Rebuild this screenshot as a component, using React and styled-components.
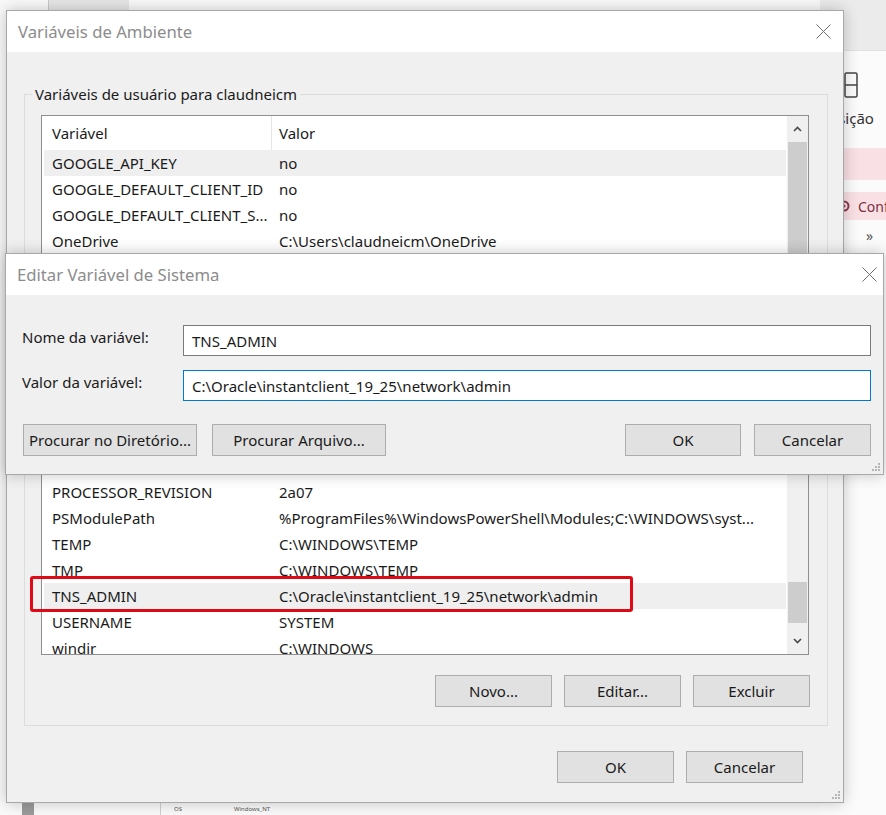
import React from 'react';
import styled, { createGlobalStyle } from 'styled-components';

const GlobalStyle = createGlobalStyle`
  html, body {
    margin: 0;
    padding: 0;
  }
  body {
    font-family: "Noto Sans", "Open Sans", sans-serif;
    background: #f9f9f9;
  }
`;

const Desktop = styled.div`
  position: relative;
  width: 886px;
  height: 815px;
  overflow: hidden;
  background: #f9f9f9;
  color: #1a1a1a;
`;

/* ---------- background app behind the dialogs ---------- */

const TopTab = styled.div`
  position: absolute;
  left: 48px;
  top: -6px;
  width: 80px;
  height: 16px;
  background: #e6e6e6;
  border-left: 1px solid #c8c8c8;
`;

const SidePane = styled.div`
  position: absolute;
  left: 820px;
  top: 0;
  width: 66px;
  height: 815px;
  background: #fbfbfb;
  display: flex;
  flex-direction: column;
  overflow: hidden;
`;

const SideTop = styled.div`
  height: 50px;
  flex-shrink: 0;
  background: #ebebeb;
  border-bottom: 1px solid #e0e0e0;
`;

const SideIcon = styled.div`
  height: 31px;
  padding-top: 21px;
  padding-left: 24px;
`;

const SideLabel = styled.div`
  font-size: 15px;
  text-align: right;
  padding-right: 13px;
  height: 30px;
  line-height: 30px;
  color: #333;
`;

const PinkBand = styled.div`
  height: ${(p) => p.$h}px;
  margin-top: ${(p) => p.$mt}px;
  flex-shrink: 0;
  background: #f9e0e5;
  display: flex;
  align-items: center;
  padding-left: 18px;
  gap: 8px;
  font-size: 14px;
  color: #7a3040;
  white-space: nowrap;
  & > svg {
    flex-shrink: 0;
  }
`;

const Chevrons = styled.div`
  margin-top: 6px;
  padding-left: 46px;
  font-size: 14px;
  color: #555;
`;

const BottomStrip = styled.div`
  position: absolute;
  left: 0;
  top: 803px;
  width: 886px;
  height: 12px;
  display: flex;
  align-items: center;
  font-size: 6px;
  color: #555;
`;

const StripBar = styled.div`
  width: ${(p) => p.$w}px;
  height: 12px;
  margin-left: ${(p) => p.$ml}px;
  background: ${(p) => p.$bg};
`;

const StripText = styled.span`
  margin-left: ${(p) => p.$ml}px;
`;

/* ---------- window chrome ---------- */

const Window = styled.div`
  position: absolute;
  left: ${(p) => p.$x}px;
  top: ${(p) => p.$y}px;
  width: ${(p) => p.$w}px;
  height: ${(p) => p.$h}px;
  box-sizing: border-box;
  display: flex;
  flex-direction: column;
  background: #f0f0f0;
  border: 1px solid #a8a8a8;
  box-shadow: 0 0 14px rgba(0, 0, 0, 0.22);
`;

const TitleBar = styled.div`
  height: 41px;
  flex-shrink: 0;
  background: #fff;
  display: flex;
  align-items: center;
  justify-content: space-between;
  padding: 0 ${(p) => p.$pr}px 0 11px;
  font-size: 16.7px;
  color: #8c8c8c;
`;

const Grip = styled.svg`
  position: absolute;
  right: 2px;
  bottom: 2px;
`;

const CloseIcon = () => (
  <svg width="15" height="15" viewBox="0 0 15 15">
    <path d="M0.5 0.5 L14.5 14.5 M14.5 0.5 L0.5 14.5" stroke="#6e6e6e" strokeWidth="1" fill="none" />
  </svg>
);

const GripIcon = () => (
  <Grip width="10" height="10" viewBox="0 0 10 10">
    {[[8, 2], [8, 5], [5, 5], [8, 8], [5, 8], [2, 8]].map(([x, y]) => (
      <rect key={`${x}-${y}`} x={x - 1} y={y - 1} width="2" height="2" fill="#b5b5b5" />
    ))}
  </Grip>
);

/* ---------- main dialog ---------- */

const MainBody = styled.div`
  flex: 1;
  display: flex;
  flex-direction: column;
  padding: 32px 15px 0 17px;
`;

const Group = styled.fieldset`
  margin: 0 0 ${(p) => p.$mb}px 0;
  padding: 11px 18px ${(p) => p.$pb}px 16px;
  border: 1px solid #dcdcdc;
  min-width: 0;
`;

const Legend = styled.legend`
  margin-left: -9px;
  padding: 0 3px;
  height: 20px;
  font-size: 15px;
  line-height: 20px;
  color: #1a1a1a;
`;

const ListBox = styled.div`
  height: ${(p) => p.$h}px;
  box-sizing: border-box;
  border: 1px solid #8f8f8f;
  background: #fff;
  display: flex;
`;

const ListContent = styled.div`
  flex: 1;
  display: flex;
  flex-direction: column;
  overflow: hidden;
`;

const HeaderRow = styled.div`
  height: 34px;
  flex-shrink: 0;
  display: flex;
  align-items: center;
  font-size: 15px;
`;

const NameCell = styled.div`
  width: 230px;
  box-sizing: border-box;
  padding-left: 10px;
  flex-shrink: 0;
  white-space: nowrap;
  overflow: hidden;
  align-self: stretch;
  display: flex;
  align-items: center;
  border-right: 1px solid ${(p) => (p.$divider ? '#e5e5e5' : 'transparent')};
`;

const ValueCell = styled.div`
  padding-left: 7px;
  white-space: nowrap;
  overflow: hidden;
`;

const Row = styled.div`
  height: 26px;
  flex-shrink: 0;
  margin: 0 0 0 2px;
  display: flex;
  align-items: center;
  font-size: 15px;
  background: ${(p) => (p.$selected ? '#efefef' : 'transparent')};
  ${NameCell} {
    padding-left: 8px;
    width: 228px;
  }
`;

const ScrollBar = styled.div`
  width: 21px;
  flex-shrink: 0;
  background: #f0f0f0;
  display: flex;
  flex-direction: column;
  border-left: 1px solid #fff;
`;

const ScrollButton = styled.div`
  height: 26px;
  flex-shrink: 0;
  display: flex;
  align-items: center;
  justify-content: center;
`;

const ScrollTrack = styled.div`
  flex: 1;
  display: flex;
  flex-direction: column;
  overflow: hidden;
`;

const ScrollThumb = styled.div`
  margin: 0 1px;
  flex-shrink: 0;
  background: #cdcdcd;
`;

const ButtonRow = styled.div`
  display: flex;
  justify-content: ${(p) => p.$justify || 'flex-end'};
  gap: ${(p) => p.$gap}px;
  margin-top: ${(p) => p.$mt || 0}px;
  padding-right: ${(p) => p.$pr || 0}px;
  margin-right: ${(p) => p.$mr || 0}px;
`;

const Button = styled.button`
  width: ${(p) => p.$w}px;
  height: 32px;
  box-sizing: border-box;
  background: #e1e1e1;
  border: 1px solid #adadad;
  border-radius: 0;
  font-family: "Noto Sans", "Open Sans", sans-serif;
  font-size: 15px;
  color: #1a1a1a;
  padding: 0;
  white-space: nowrap;
  cursor: default;
`;

const Chevron = ({ down }) => (
  <svg width="9" height="6" viewBox="0 0 9 6">
    <path
      d={down ? 'M1 1 L4.5 4.5 L8 1' : 'M1 5 L4.5 1.5 L8 5'}
      stroke="#4a4a4a"
      strokeWidth="1.6"
      fill="none"
    />
  </svg>
);

const Highlight = styled.div`
  position: absolute;
  left: 30px;
  top: 576px;
  width: 603px;
  height: 36px;
  box-sizing: border-box;
  border: 3px solid #e00916;
  border-radius: 3px;
  pointer-events: none;
`;

/* ---------- edit dialog ---------- */

const EditBody = styled.div`
  flex: 1;
  padding: 30px 12px 0 16px;
  display: flex;
  flex-direction: column;
`;

const FieldGrid = styled.div`
  display: grid;
  grid-template-columns: 161px 1fr;
  row-gap: 14px;
  align-items: start;
`;

const Label = styled.label`
  font-size: 15px;
  line-height: 20px;
  padding-top: 2px;
`;

const TextInput = styled.input`
  height: 31px;
  box-sizing: border-box;
  border: 1px solid ${(p) => (p.$focused ? '#0078d7' : '#7a7a7a')};
  outline: none;
  padding: 0 8px;
  font-family: "Noto Sans", "Open Sans", sans-serif;
  font-size: 15px;
  color: #1a1a1a;
  background: #fff;
`;

const ButtonGroup = styled.div`
  display: flex;
  gap: ${(p) => p.$gap}px;
  margin-left: ${(p) => p.$ml || 0}px;
`;

// only the rows not covered by the edit dialog carry text
const userVars = [
  ['GOOGLE_API_KEY', 'no', true],
  ['GOOGLE_DEFAULT_CLIENT_ID', 'no'],
  ['GOOGLE_DEFAULT_CLIENT_S...', 'no'],
  ['OneDrive', 'C:\\Users\\claudneicm\\OneDrive'],
];

const systemVars = [
  ['', ''],
  ['PROCESSOR_REVISION', '2a07'],
  ['PSModulePath', '%ProgramFiles%\\WindowsPowerShell\\Modules;C:\\WINDOWS\\syst...'],
  ['TEMP', 'C:\\WINDOWS\\TEMP'],
  ['TMP', 'C:\\WINDOWS\\TEMP'],
  ['TNS_ADMIN', 'C:\\Oracle\\instantclient_19_25\\network\\admin', true],
  ['USERNAME', 'SYSTEM'],
  ['windir', 'C:\\WINDOWS'],
];

function VarList({ height, rows, thumbTop, thumbHeight, showHeader }) {
  return (
    <ListBox $h={height}>
      <ListContent>
        <HeaderRow>
          <NameCell $divider>{showHeader && 'Variável'}</NameCell>
          <ValueCell>{showHeader && 'Valor'}</ValueCell>
        </HeaderRow>
        {rows.map(([name, value, selected], i) => (
          <Row key={i} $selected={selected}>
            <NameCell>{name}</NameCell>
            <ValueCell>{value}</ValueCell>
          </Row>
        ))}
      </ListContent>
      <ScrollBar>
        <ScrollButton>
          <Chevron />
        </ScrollButton>
        <ScrollTrack>
          <ScrollThumb style={{ marginTop: thumbTop, height: thumbHeight }} />
        </ScrollTrack>
        <ScrollButton>
          <Chevron down />
        </ScrollButton>
      </ScrollBar>
    </ListBox>
  );
}

function SettingsIcon() {
  return (
    <svg width="12" height="12" viewBox="0 0 12 12">
      <circle cx="6" cy="6" r="4.5" fill="none" stroke="#8a3a4a" strokeWidth="2" />
      <circle cx="6" cy="6" r="1.5" fill="#8a3a4a" />
    </svg>
  );
}

export default function App() {
  return (
    <Desktop>
      <GlobalStyle />

      <TopTab />
      <SidePane>
        <SideTop />
        <SideIcon>
          <svg width="14" height="26" viewBox="0 0 14 26">
            <rect x="1" y="1" width="12" height="24" rx="1.5" fill="none" stroke="#444" strokeWidth="1.5" />
            <path d="M1 13 H13" stroke="#444" strokeWidth="1.5" />
          </svg>
        </SideIcon>
        <SideLabel>Posição</SideLabel>
        <PinkBand $h={32} $mt={15} />
        <PinkBand $h={28} $mt={12}>
          <SettingsIcon />
          Configurações
        </PinkBand>
        <Chevrons>»</Chevrons>
      </SidePane>
      <BottomStrip>
        <StripBar $w={12} $ml={22} $bg="#9a9a9a" />
        <StripBar $w={1} $ml={126} $bg="#cfcfcf" />
        <StripText $ml={13}>OS</StripText>
        <StripText $ml={52}>Windows_NT</StripText>
      </BottomStrip>

      <Window $x={6} $y={10} $w={838} $h={793}>
        <TitleBar $pr={12}>
          <span>Variáveis de Ambiente</span>
          <CloseIcon />
        </TitleBar>
        <MainBody>
          <Group $mb={12} $pb={70}>
            <Legend>Variáveis de usuário para claudneicm</Legend>
            <VarList height={189} rows={userVars} thumbTop={0} thumbHeight={120} showHeader />
          </Group>
          <Group $mb={25} $pb={18}>
            <Legend />
            <VarList height={237} rows={systemVars} thumbTop={137} thumbHeight={41} />
            <ButtonRow $gap={12} $mt={20} $mr={-1}>
              <Button $w={117}>Novo...</Button>
              <Button $w={117}>Editar...</Button>
              <Button $w={117}>Excluir</Button>
            </ButtonRow>
          </Group>
          <ButtonRow $gap={12} $pr={25}>
            <Button $w={117}>OK</Button>
            <Button $w={117}>Cancelar</Button>
          </ButtonRow>
        </MainBody>
        <GripIcon />
      </Window>

      <Highlight />

      <Window $x={5} $y={253} $w={879} $h={222}>
        <TitleBar $pr={6}>
          <span>Editar Variável de Sistema</span>
          <CloseIcon />
        </TitleBar>
        <EditBody>
          <FieldGrid>
            <Label>Nome da variável:</Label>
            <TextInput defaultValue="TNS_ADMIN" />
            <Label>Valor da variável:</Label>
            <TextInput $focused defaultValue="C:\Oracle\instantclient_19_25\network\admin" />
          </FieldGrid>
          <ButtonRow $justify="space-between" $gap={0} $mt={23}>
            <ButtonGroup $gap={15} $ml={1}>
              <Button $w={174}>Procurar no Diretório...</Button>
              <Button $w={174}>Procurar Arquivo...</Button>
            </ButtonGroup>
            <ButtonGroup $gap={13}>
              <Button $w={116}>OK</Button>
              <Button $w={117}>Cancelar</Button>
            </ButtonGroup>
          </ButtonRow>
        </EditBody>
        <GripIcon />
      </Window>
    </Desktop>
  );
}
